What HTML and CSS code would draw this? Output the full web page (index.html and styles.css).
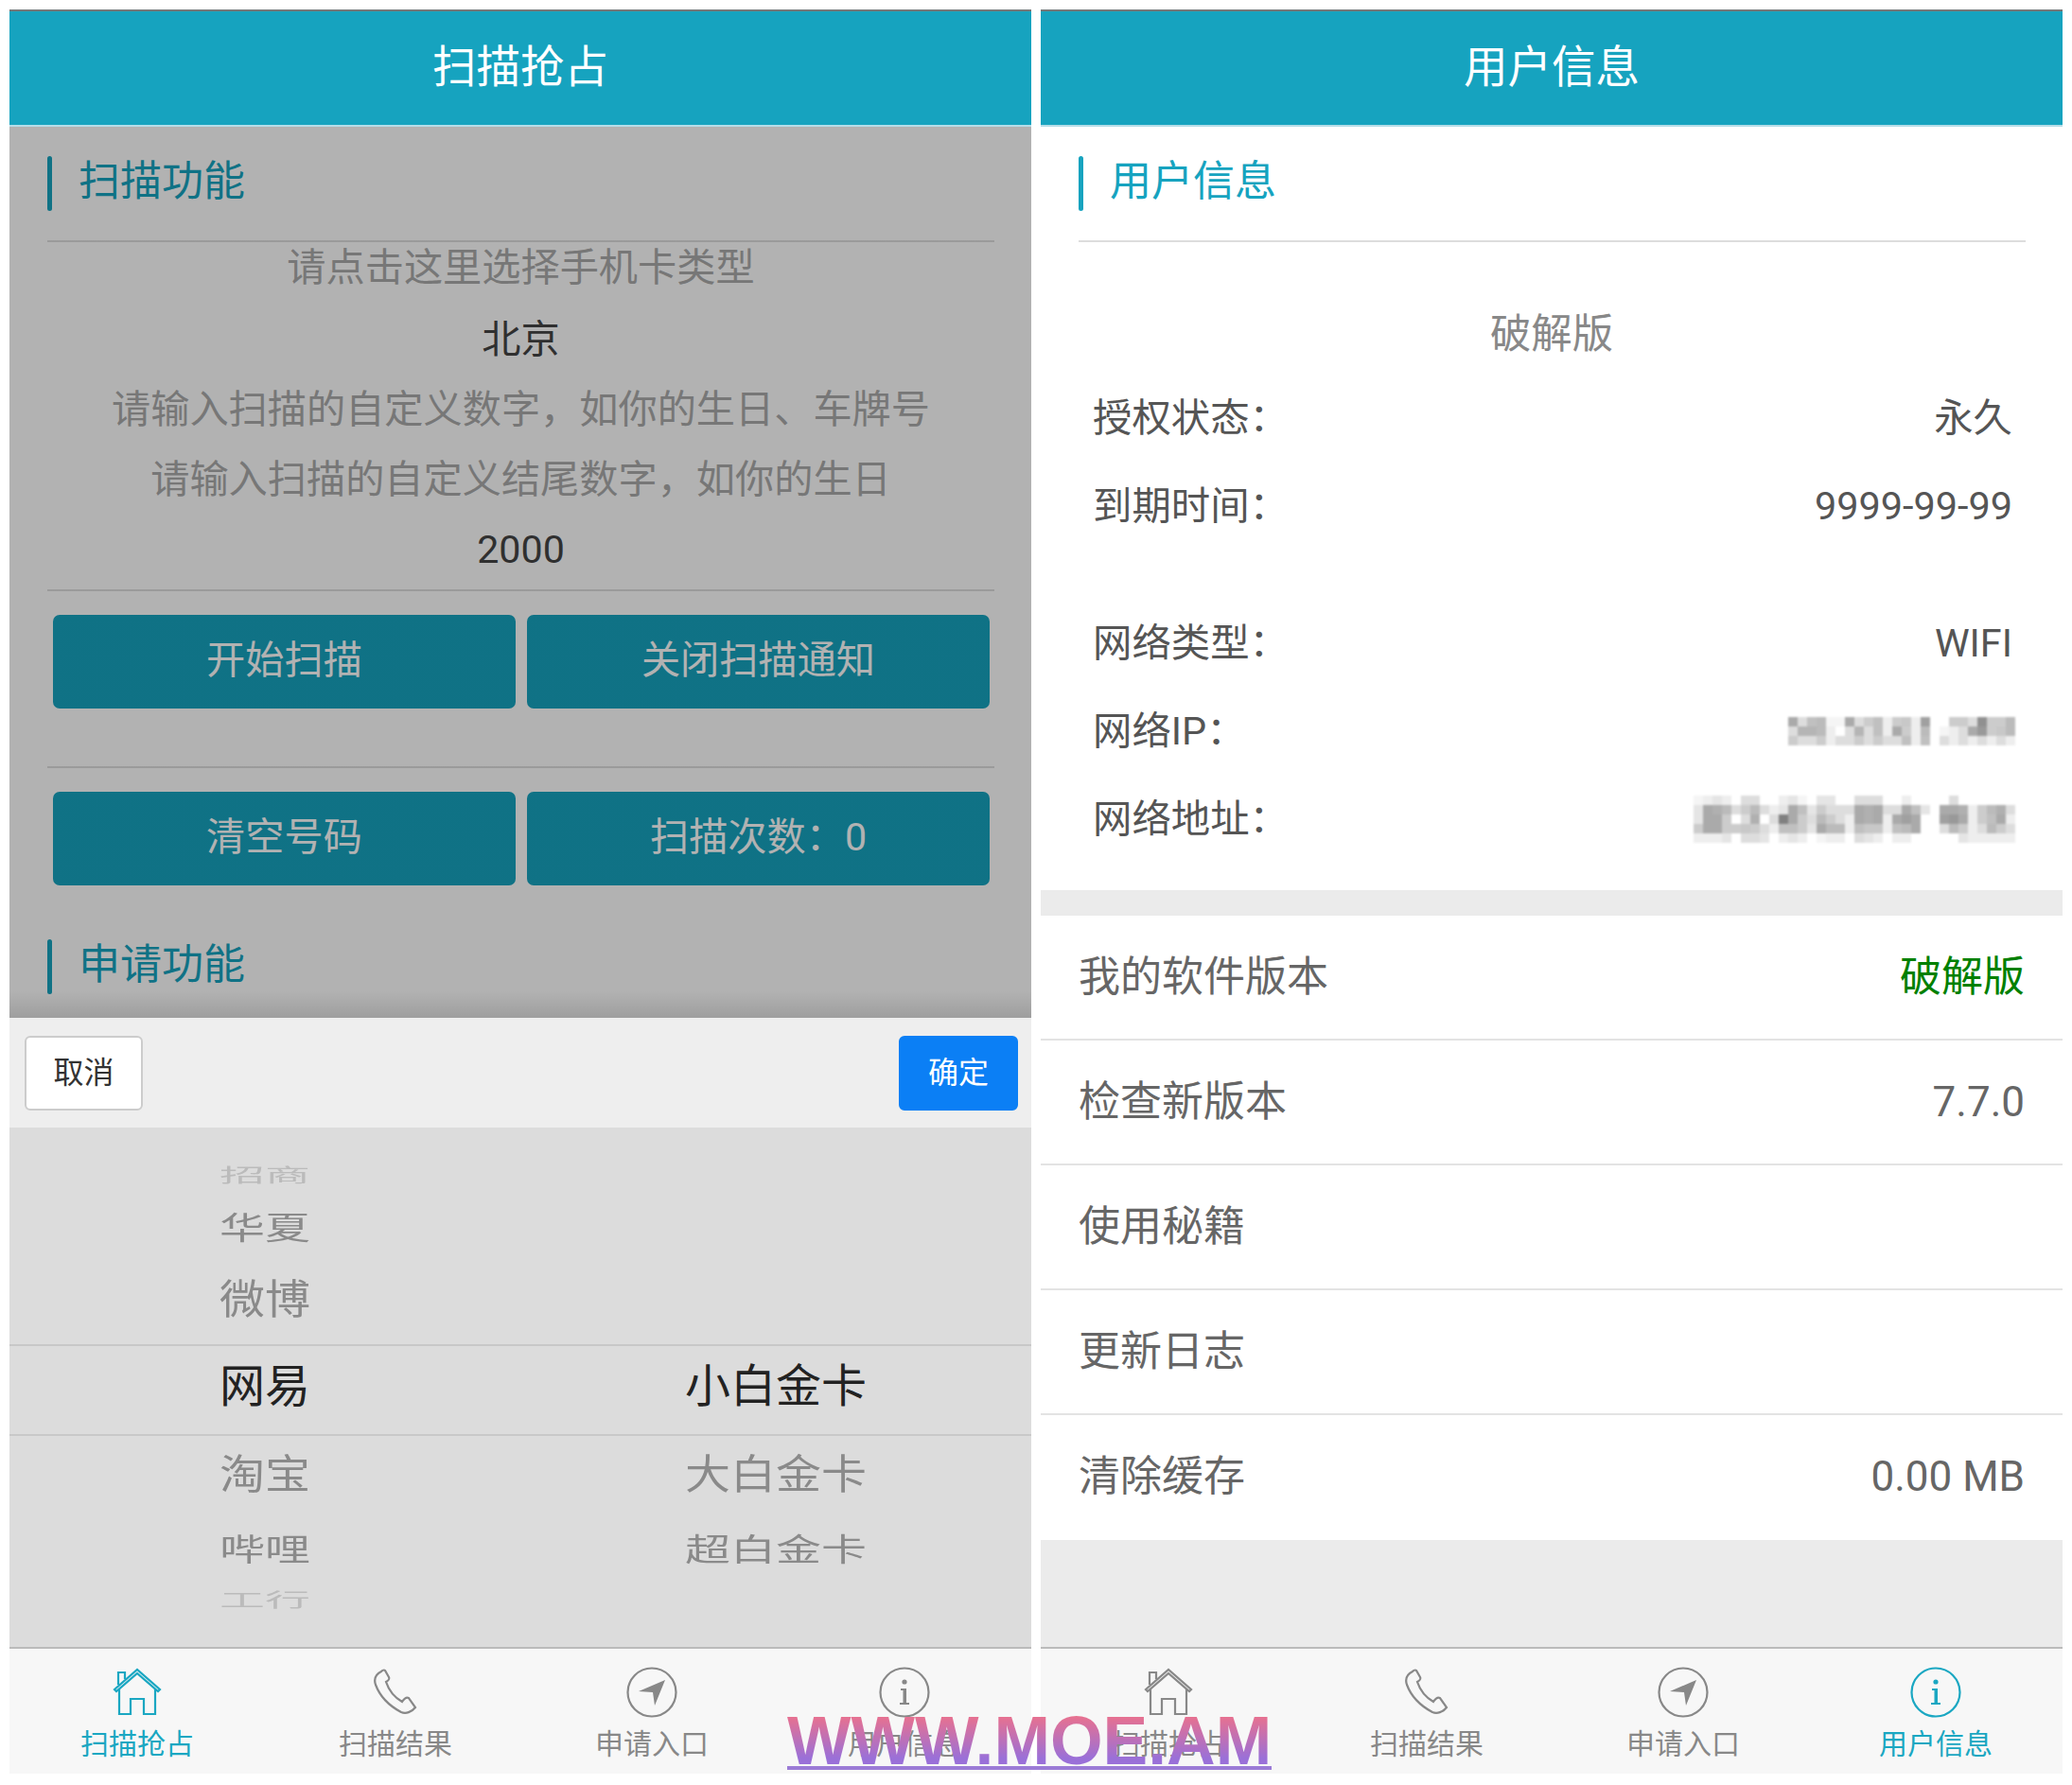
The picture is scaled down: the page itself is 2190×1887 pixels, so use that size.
FILE: index.html
```html
<!DOCTYPE html>
<html lang="zh-CN">
<head>
  <meta charset="UTF-8" />
  <title>扫描抢占</title>
  <link rel="stylesheet" href="styles.css">
</head>
<body>
  <svg class="icon-defs" xmlns="http://www.w3.org/2000/svg">
    <symbol id="icon-home" viewBox="0 0 54 54">
      <path d="M3 24 L27 3 L51 24 L49 26 L27 7 L5 26 Z" />
      <path d="M8 23 V50 H20 V34 H34 V50 H46 V23" />
      <path d="M7 19 V6 H14 V13" />
    </symbol>
    <symbol id="icon-phone" viewBox="0 0 54 54">
      <path d="M12 5 C6 8 4 13 6 19 C10 30 20 41 33 48 C38 50 44 48 48 43 L41 33 C39 32 36 34 34 37 C27 33 20 25 17 16 C20 14 21 13 20 11 L16 4 C15 3 13 4 12 5 Z" />
    </symbol>
    <symbol id="icon-nav" viewBox="0 0 54 54">
      <circle cx="27" cy="27" r="25.5" />
      <path class="solid" d="M41 14 L13 26 L28 27 L30 41 Z" />
    </symbol>
    <symbol id="icon-info" viewBox="0 0 54 54">
      <circle cx="27" cy="27" r="25.5" />
      <circle class="solid" cx="27" cy="16" r="2.6" />
      <path class="solid" d="M23 23 H29 V38 H32 V40 H22 V38 H25.5 V25 H23 Z" />
    </symbol>
  </svg>

  <div class="phone">
    <div class="topbar">扫描抢占</div>
    <div class="page">
      <div class="section-head lined"><div class="section-title">扫描功能</div></div>
      <div class="fields">
        <div class="field field-first hint">请点击这里选择手机卡类型</div>
        <div class="field">北京</div>
        <div class="field hint">请输入扫描的自定义数字，如你的生日、车牌号</div>
        <div class="field hint">请输入扫描的自定义结尾数字，如你的生日</div>
        <div class="field">2000</div>
      </div>
      <div class="btn-row">
        <div class="btn">开始扫描</div>
        <div class="btn">关闭扫描通知</div>
      </div>
      <div class="btn-row">
        <div class="btn">清空号码</div>
        <div class="btn">扫描次数：0</div>
      </div>
      <div class="section-head"><div class="section-title">申请功能</div></div>
    </div>

    <div class="dim"></div>

    <div class="sheet">
      <div class="sheet-bar">
        <div class="sheet-btn cancel">取消</div>
        <div class="sheet-btn confirm">确定</div>
      </div>
      <div class="wheel">
        <div class="wheel-row h-pad"></div>
        <div class="wheel-row h-far-top far"><span>招商</span><span></span></div>
        <div class="wheel-row h-mid-top mid"><span>华夏</span><span></span></div>
        <div class="wheel-row h-near-top near"><span>微博</span><span></span></div>
        <div class="wheel-row current"><span>网易</span><span>小白金卡</span></div>
        <div class="wheel-row h-near-bottom near"><span>淘宝</span><span>大白金卡</span></div>
        <div class="wheel-row h-mid-bottom mid"><span>哔哩</span><span>超白金卡</span></div>
        <div class="wheel-row h-far-bottom far"><span>工行</span><span></span></div>
      </div>
    </div>

    <div class="tabbar">
      <div class="tab active"><svg class="tab-icon"><use href="#icon-home"/></svg>扫描抢占</div>
      <div class="tab"><svg class="tab-icon"><use href="#icon-phone"/></svg>扫描结果</div>
      <div class="tab"><svg class="tab-icon"><use href="#icon-nav"/></svg>申请入口</div>
      <div class="tab"><svg class="tab-icon"><use href="#icon-info"/></svg>用户信息</div>
    </div>
  </div>

  <div class="phone">
    <div class="topbar">用户信息</div>
    <div class="page user-page">
      <div class="user-top">
        <div class="section-head lined"><div class="section-title">用户信息</div></div>
        <div class="edition">破解版</div>
        <div class="info-row"><span>授权状态：</span><span>永久</span></div>
        <div class="info-row"><span>到期时间：</span><span>9999-99-99</span></div>
        <div class="info-row info-gap"><span>网络类型：</span><span>WIFI</span></div>
        <div class="info-row"><span>网络IP：</span><div class="mosaic mosaic-ip"></div></div>
        <div class="info-row"><span>网络地址：</span><div class="mosaic mosaic-addr"></div></div>
      </div>
      <div class="band"></div>
      <div class="list">
        <div class="list-row"><span>我的软件版本</span><span class="green">破解版</span></div>
        <div class="list-row"><span>检查新版本</span><span>7.7.0</span></div>
        <div class="list-row"><span>使用秘籍</span></div>
        <div class="list-row"><span>更新日志</span></div>
        <div class="list-row"><span>清除缓存</span><span>0.00 MB</span></div>
      </div>
    </div>
    <div class="tabbar">
      <div class="tab"><svg class="tab-icon"><use href="#icon-home"/></svg>扫描抢占</div>
      <div class="tab"><svg class="tab-icon"><use href="#icon-phone"/></svg>扫描结果</div>
      <div class="tab"><svg class="tab-icon"><use href="#icon-nav"/></svg>申请入口</div>
      <div class="tab active"><svg class="tab-icon"><use href="#icon-info"/></svg>用户信息</div>
    </div>
  </div>

  <div class="watermark">WWW.MOE.AM</div>
</body>
</html>
```

FILE: styles.css
```css
* {
  box-sizing: border-box;
}

body {
  margin: 0;
  padding: 10px 10px 0;
  width: 2190px;
  height: 1887px;
  position: relative;
  display: flex;
  gap: 10px;
  background: #fff;
  overflow: hidden;
  font-family: Roboto, "Noto Sans CJK SC", sans-serif;
  color: #444;
}

.icon-defs {
  position: absolute;
  width: 0;
  height: 0;
}

.phone {
  width: 1080px;
  height: 1865px;
  position: relative;
  display: flex;
  flex-direction: column;
  background: #fff;
  overflow: hidden;
}

.topbar {
  height: 124px;
  flex-shrink: 0;
  border-top: 2px solid #777;
  border-bottom: 2px solid #b5dde8;
  background: #16a3bf;
  color: #fff;
  font-size: 46.5px;
  line-height: 118px;
  text-align: center;
}

.page {
  flex: 1;
  min-height: 0;
}

/* section heading with the blue bar */
.section-head {
  margin: 0 39px 0 40px;
  padding: 31px 0;
}

.section-head.lined {
  border-bottom: 2px solid #ddd;
}

.section-title {
  height: 58px;
  display: flex;
  gap: 28px;
  color: #16a3bf;
  font-size: 44px;
  line-height: 54px;
}

.section-title::before {
  content: "";
  width: 5px;
  height: 58px;
  border-radius: 3px;
  background: #16a3bf;
}

.fields {
  margin: 0 39px 0 40px;
  padding-bottom: 5px;
  border-bottom: 2px solid #ddd;
}

.field {
  height: 74px;
  font-size: 41.2px;
  line-height: 74px;
  text-align: center;
}

.field-first {
  height: 54px;
  margin-bottom: 12px;
  line-height: 54px;
}

.hint {
  color: #aaa;
}

.btn-row {
  margin: 0 39px 0 40px;
  padding: 25px 5px 0 6px;
  height: 187px;
  display: flex;
  gap: 12px;
  border-bottom: 2px solid #ddd;
}

.btn-row + .btn-row {
  height: 150px;
  border-bottom: 0;
}

.btn {
  flex: 1;
  height: 99px;
  border-radius: 7px;
  background: #16a3bf;
  color: #fff;
  font-size: 41.2px;
  line-height: 97px;
  text-align: center;
}

.dim {
  position: absolute;
  left: 0;
  right: 0;
  top: 124px;
  height: 942px;
  background: linear-gradient(rgba(0, 0, 0, .3) 97%, rgba(0, 0, 0, .38));
}

/* bottom picker */
.sheet {
  position: absolute;
  left: 0;
  right: 0;
  bottom: 134px;
  height: 665px;
  display: flex;
  flex-direction: column;
}

.sheet-bar {
  height: 116px;
  padding: 0 14px 0 16px;
  display: flex;
  align-items: center;
  justify-content: space-between;
  background: #eee;
}

.sheet-btn {
  height: 79px;
  width: 125px;
  border-radius: 6px;
  font-size: 32px;
  line-height: 75px;
  text-align: center;
}

.cancel {
  background: #fff;
  border: 2px solid #ccc;
  color: #333;
}

.confirm {
  width: 126px;
  background: #0b7ff5;
  border: 2px solid #0b7ff5;
  color: #fff;
}

.wheel {
  flex: 1;
  background: #dcdcdc;
}

.wheel-row {
  display: grid;
  grid-template-columns: 1fr 1fr;
  grid-template-rows: 100%;
  align-items: center;
  justify-items: center;
  color: #8a8a8a;
  font-size: 48px;
}

.wheel-row span {
  display: block;
  line-height: 1;
}

.h-pad { height: 30px; }
.h-far-top { height: 42px; }
.h-mid-top { height: 70px; }
.h-near-top { height: 87px; padding-bottom: 5px; }
.h-near-bottom { height: 84px; }
.h-mid-bottom { height: 74px; }
.h-far-bottom { height: 32px; }

.current {
  height: 97px;
  padding-bottom: 8px;
  border-top: 2px solid #c8c8c8;
  border-bottom: 2px solid #c8c8c8;
  color: #222;
}

.near span { transform: scaleY(.9); }
.mid span { transform: scaleY(.68); }
.far span { transform: scaleY(.42); color: #bbb; }

.tabbar {
  height: 134px;
  flex-shrink: 0;
  position: relative;
  display: grid;
  grid-template-columns: 270px 276px 266px 268px;
  border-top: 2px solid #bbb;
  background: #f7f7f7;
}

.tab {
  padding-top: 19px;
  display: flex;
  flex-direction: column;
  align-items: center;
  gap: 10px;
  color: #888;
  font-size: 30px;
  line-height: 36px;
}

.tab.active {
  color: #1aa7c2;
}

.tab-icon {
  width: 54px;
  height: 54px;
  fill: none;
  stroke: currentColor;
  stroke-width: 2.2;
}

.solid {
  fill: currentColor;
  stroke: none;
}

/* right screen */
.user-page {
  display: flex;
  flex-direction: column;
  background: #ebebeb;
}

.user-top {
  padding-bottom: 31px;
  background: #fff;
}

.edition {
  margin-top: 51px;
  height: 86px;
  color: #888;
  font-size: 43.4px;
  line-height: 94px;
  text-align: center;
}

.info-row {
  height: 93px;
  padding: 5px 53px 0 55px;
  display: flex;
  align-items: baseline;
  justify-content: space-between;
  color: #555;
  font-size: 41.4px;
  line-height: 88px;
}

.info-gap {
  margin-top: 52px;
}

/* blurred-out values, one gradient strip per row of cells */
.mosaic {
  align-self: center;
  margin-right: -3px;
  background-repeat: no-repeat;
  filter: blur(1px);
}

.mosaic-ip {
  width: 240px;
  height: 30px;
  background-size: 240px 10px;
  background-position: 0 0, 0 10px, 0 20px;
  background-image:
    linear-gradient(90deg, #aaa 0 10px, #ddd 0 20px, #c0c0c0 0 30px, #bbb 0 40px, #f5f5f5 0 60px, #aaa 0 70px, #ddd 0 80px, #ccc 0 90px, #c0c0c0 0 100px, #eee 0 110px, #ccc 0 120px, #c8c8c8 0 130px, #eee 0 140px, #a0a0a0 0 150px, #fff 0 170px, #ccc 0 190px, #ddd 0 200px, #909090 0 210px, #ccc 0 230px, #bbb 0 240px),
    linear-gradient(90deg, #ddd 0 10px, #b5b5b5 0 30px, #bbb 0 40px, #eee 0 50px, #fff 0 60px, #ddd 0 70px, #b5b5b5 0 80px, #ddd 0 90px, #c0c0c0 0 100px, #eee 0 110px, #aaa 0 120px, #ccc 0 130px, #eee 0 140px, #bbb 0 150px, #fff 0 160px, #f5f5f5 0 170px, #eee 0 180px, #ddd 0 190px, #aaa 0 200px, #999 0 210px, #ccc 0 220px, #c8c8c8 0 230px, #bbb 0 240px),
    linear-gradient(90deg, #ccc 0 10px, #ddd 0 30px, #ccc 0 40px, #eee 0 50px, #ddd 0 70px, #ccc 0 80px, #ddd 0 90px, #ccc 0 100px, #ddd 0 120px, #c0c0c0 0 130px, #eee 0 140px, #c0c0c0 0 150px, #fff 0 160px, #ddd 0 170px, #eee 0 180px, #ddd 0 190px, #eee 0 200px, #ddd 0 210px, #eee 0 220px, #ddd 0 230px, #eee 0 240px);
}

.mosaic-addr {
  width: 340px;
  height: 50px;
  background-size: 340px 10px;
  background-position: 0 0, 0 10px, 0 20px, 0 30px, 0 40px;
  background-image:
    linear-gradient(90deg, #f5f5f5 0 10px, #eee 0 20px, #e5e5e5 0 30px, #eee 0 40px, #fff 0 50px, #ddd 0 70px, #fff 0 90px, #eee 0 100px, #e5e5e5 0 110px, #f5f5f5 0 120px, #fff 0 130px, #e5e5e5 0 150px, #fff 0 170px, #ddd 0 200px, #fff 0 220px, #eee 0 230px, #fff 0 270px, #ddd 0 280px, #fff 0 340px),
    linear-gradient(90deg, #e5e5e5 0 10px, #aaa 0 20px, #b0b0b0 0 30px, #bbb 0 40px, #ddd 0 50px, #ccc 0 60px, #bbb 0 70px, #ddd 0 80px, #eee 0 90px, #e5e5e5 0 100px, #aaa 0 110px, #c0c0c0 0 120px, #e5e5e5 0 130px, #ccc 0 140px, #ddd 0 170px, #aaa 0 180px, #b0b0b0 0 190px, #aaa 0 200px, #ddd 0 220px, #aaa 0 230px, #c0c0c0 0 240px, #e5e5e5 0 250px, #fff 0 260px, #aaa 0 280px, #b0b0b0 0 290px, #eee 0 300px, #ccc 0 310px, #bbb 0 320px, #b0b0b0 0 330px, #ddd 0 340px),
    linear-gradient(90deg, #e5e5e5 0 10px, #aaa 0 30px, #ccc 0 40px, #fff 0 50px, #ddd 0 60px, #b0b0b0 0 70px, #fff 0 80px, #ddd 0 90px, #808080 0 100px, #aaa 0 110px, #ccc 0 120px, #ddd 0 130px, #bbb 0 140px, #ccc 0 150px, #ddd 0 160px, #eee 0 170px, #aaa 0 180px, #b0b0b0 0 190px, #aaa 0 200px, #eee 0 210px, #aaa 0 220px, #a0a0a0 0 230px, #aaa 0 240px, #fff 0 260px, #a0a0a0 0 270px, #999 0 280px, #aaa 0 290px, #eee 0 300px, #ccc 0 310px, #c0c0c0 0 320px, #aaa 0 330px, #eee 0 340px),
    linear-gradient(90deg, #ccc 0 10px, #aaa 0 30px, #ccc 0 50px, #c8c8c8 0 60px, #ccc 0 70px, #ddd 0 80px, #eee 0 90px, #c0c0c0 0 110px, #ccc 0 120px, #e5e5e5 0 130px, #aaa 0 140px, #bbb 0 160px, #eee 0 170px, #c0c0c0 0 180px, #c8c8c8 0 200px, #eee 0 210px, #c0c0c0 0 220px, #bbb 0 230px, #aaa 0 240px, #fff 0 260px, #ddd 0 270px, #bbb 0 280px, #ccc 0 290px, #eee 0 300px, #ddd 0 310px, #bbb 0 320px, #ccc 0 330px, #ddd 0 340px),
    linear-gradient(90deg, #eee 0 30px, #e5e5e5 0 40px, #fff 0 50px, #ddd 0 70px, #e5e5e5 0 80px, #fff 0 90px, #eee 0 100px, #e5e5e5 0 110px, #eee 0 120px, #fff 0 130px, #f5f5f5 0 140px, #eee 0 160px, #fff 0 170px, #ddd 0 180px, #e5e5e5 0 190px, #eee 0 200px, #fff 0 210px, #eee 0 230px, #fff 0 280px, #e5e5e5 0 290px, #eee 0 340px);
}

.band {
  height: 27px;
}

.list {
  background: #fff;
}

.list-row {
  height: 132px;
  padding: 0 40px;
  display: flex;
  align-items: baseline;
  justify-content: space-between;
  border-bottom: 2px solid #e3e3e3;
  color: #666;
  font-size: 44px;
  line-height: 130px;
}

.list-row:last-child {
  border-bottom: 0;
}

.green {
  color: #008000;
}

.watermark {
  position: absolute;
  left: 832px;
  top: 1801px;
  width: 512px;
  height: 70px;
  border-bottom: 4px solid #9b7bd6;
  background: linear-gradient(#e8718f 20%, #9a70d8 88%);
  -webkit-background-clip: text;
  background-clip: text;
  color: transparent;
  font-family: "Liberation Sans", sans-serif;
  font-size: 71.5px;
  font-weight: 700;
  line-height: 78px;
  text-align: center;
  white-space: nowrap;
}
```
